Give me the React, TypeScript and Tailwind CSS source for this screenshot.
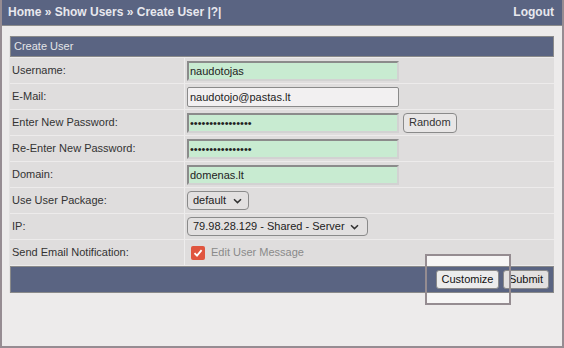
import React from "react";

const font = { fontFamily: '"Liberation Sans", Arial, sans-serif' };

function Chevron() {
  return (
    <svg width="9" height="6" viewBox="0 0 9 6" className="shrink-0">
      <path d="M1 1.2 L4.5 4.6 L8 1.2" fill="none" stroke="#333" strokeWidth="1.5" />
    </svg>
  );
}

function Row({ label, children }: { label: string; children: React.ReactNode }) {
  return (
    <div className="flex h-[25px]">
      <div className="flex w-[174px] items-center bg-[#dfdddd] pl-[2px] text-[11px] text-[#333]">{label}</div>
      <div className="w-px bg-[#eeeded]" />
      <div className="flex flex-1 items-center gap-[4px] bg-[#dfdddd] pl-[2px]">{children}</div>
    </div>
  );
}

function GreenInput({ value, password }: { value: string; password?: boolean }) {
  return (
    <input
      readOnly
      type={password ? "password" : "text"}
      value={value}
      className="h-[20px] w-[212px] border-2 border-t-[#8b8b8b] border-l-[#8b8b8b] border-b-[#d2d2d2] border-r-[#d2d2d2] bg-[#c8ebd1] px-[1px] text-[11px] text-[#222] outline-none"
      style={font}
    />
  );
}

export default function App() {
  return (
    <div className="relative h-[348px] w-[564px] overflow-hidden border-x-2 border-b-2 border-[#968c92] bg-[#edebeb]" style={font}>
      <div className="flex h-[26px] items-center justify-between border-b border-[#8c8c8c] bg-[#5a6482] pl-[6px] pr-[8px] pb-[2px] text-[12px] font-bold text-[#e8e8ee]">
        <span>Home » Show Users » Create User |?|</span>
        <span>Logout</span>
      </div>

      <div className="ml-[7px] mt-[10px] flex w-[545px] flex-col gap-px border-l border-[#e4e2e2]">
        <div className="flex h-[21px] items-center border border-[#8a8a8a] bg-[#5a6482] pl-[3px] text-[11px] text-[#e4e4e8]">
          Create User
        </div>
        <Row label="Username:">
          <GreenInput value="naudotojas" />
        </Row>
        <Row label="E-Mail:">
          <input
            readOnly
            value="naudotojo@pastas.lt"
            className="h-[20px] w-[212px] rounded-[2px] border border-[#8a8a8a] bg-[#f2f0f1] px-[2px] text-[11px] text-[#222] outline-none"
            style={font}
          />
        </Row>
        <Row label="Enter New Password:">
          <GreenInput value="abcdefghijklmnop" password />
          <button className="h-[20px] rounded-[4px] border border-[#8a8a8a] bg-[#e8e6e6] px-[5px] text-[11px] text-[#333]" style={font}>
            Random
          </button>
        </Row>
        <Row label="Re-Enter New Password:">
          <GreenInput value="abcdefghijklmnop" password />
        </Row>
        <Row label="Domain:">
          <GreenInput value="domenas.lt" />
        </Row>
        <Row label="Use User Package:">
          <div className="flex h-[19px] w-[62px] items-center justify-between rounded-[4px] border border-[#8a8a8a] bg-[#e2e0e0] pl-[5px] pr-[6px] text-[11px] text-[#222]">
            <span>default</span>
            <Chevron />
          </div>
        </Row>
        <Row label="IP:">
          <div className="flex h-[19px] w-[181px] items-center justify-between rounded-[4px] border border-[#8a8a8a] bg-[#e2e0e0] pl-[5px] pr-[8px] text-[11px] text-[#222]">
            <span>79.98.28.129 - Shared - Server</span>
            <Chevron />
          </div>
        </Row>
        <Row label="Send Email Notification:">
          <div className="ml-[4px] flex h-[14px] w-[14px] items-center justify-center rounded-[2px] bg-[#e0553f]">
            <svg width="10" height="10" viewBox="0 0 10 10">
              <path d="M1.5 5.2 L4 7.7 L8.6 2.2" fill="none" stroke="#fff" strokeWidth="1.8" />
            </svg>
          </div>
          <span className="ml-[2px] text-[11px] text-[#8a8a8a]">Edit User Message</span>
        </Row>
        <div className="relative z-20 flex h-[27px] items-center justify-end gap-[4px] border border-[#8a8a8a] bg-[#5a6482] pr-[4px]">
          <button className="h-[19px] w-[63px] rounded-[3px] border border-[#8a8a8a] bg-[#ececec] text-[11px] text-[#111]" style={font}>
            Customize
          </button>
          <button className="h-[19px] w-[46px] rounded-[3px] border border-[#8a8a8a] bg-[#e2e0e0] text-[11px] text-[#111]" style={font}>
            Submit
          </button>
        </div>
      </div>

      <div className="absolute left-[423px] top-[254px] z-10 h-[51px] w-[86px] bg-[#f6f5f5]" />
      <div className="absolute left-[423px] top-[254px] z-30 h-[51px] w-[86px] border-2 border-[#958c91]" />
    </div>
  );
}
